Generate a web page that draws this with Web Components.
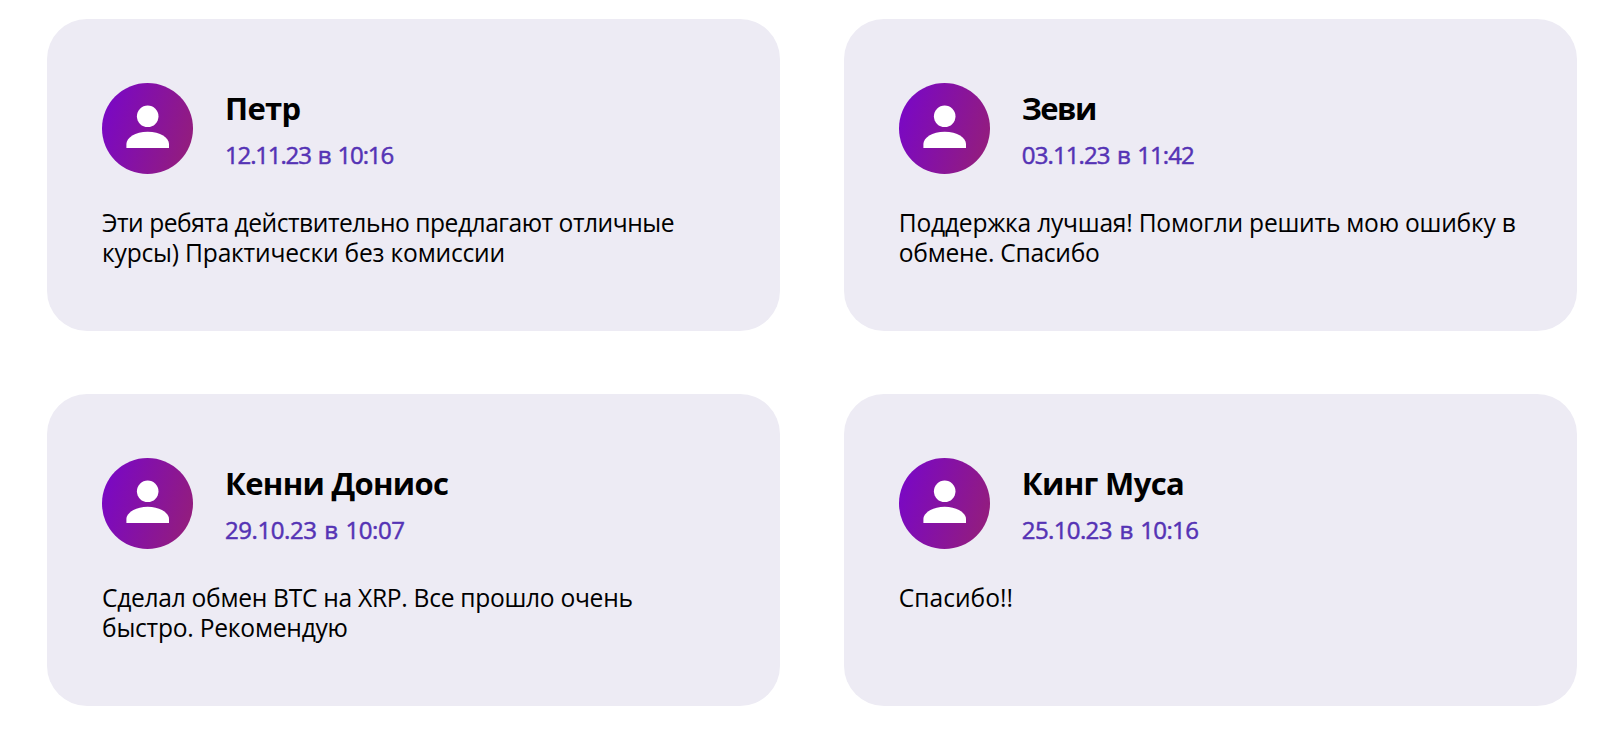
<!DOCTYPE html>
<html lang="ru">
<head>
    <meta charset="UTF-8">
    <title>Отзывы</title>
    <style>
        body {
            margin: 0;
            background-color: #fff;
            color: #000;
            font-family: "Open Sans", "Noto Sans", sans-serif;
            font-size: 24.6px;
        }
    </style>
</head>
<body>
    <review-list>
        <review-card style="--name: -0.65px; --date: -1.15px; --first: -0.48px; --rest: -0.19px">
            <span slot="name">Петр</span>
            <span slot="date">12.11.23 в 10:16</span>
            Эти ребята действительно предлагают отличные<br>курсы) Практически без комиссии
        </review-card>
        <review-card style="--name: -1.6px; --date: -0.89px; --first: -0.23px; --rest: -0.26px">
            <span slot="name">Зеви</span>
            <span slot="date">03.11.23 в 11:42</span>
            Поддержка лучшая! Помогли решить мою ошибку в<br>обмене. Спасибо
        </review-card>
        <review-card style="--name: -0.68px; --date: -0.43px; --first: -0.29px; --rest: -0.23px">
            <span slot="name">Кенни Дониос</span>
            <span slot="date">29.10.23 в 10:07</span>
            Сделал обмен BTC на XRP. Все прошло очень<br>быстро. Рекомендую
        </review-card>
        <review-card style="--name: -0.65px; --date: -0.62px; --first: 0px; --rest: 0px">
            <span slot="name">Кинг Муса</span>
            <span slot="date">25.10.23 в 10:16</span>
            Спасибо!!
        </review-card>
    </review-list>

    <script>
        class UserAvatar extends HTMLElement {
            connectedCallback() {
                this.attachShadow({ mode: 'open' });
                this.shadowRoot.innerHTML = `
                    <style>
                        :host {
                            display: block;
                            flex: none;
                            width: 91px;
                            height: 91px;
                        }
                        svg {
                            display: block;
                            width: 100%;
                            height: 100%;
                        }
                    </style>
                    <svg viewBox="0 0 91 91">
                        <defs>
                            <linearGradient id="fill" x1="0" y1="0.35" x2="1" y2="0.65">
                                <stop offset="0" stop-color="#7a08c4"/>
                                <stop offset="1" stop-color="#931d7d"/>
                            </linearGradient>
                        </defs>
                        <circle cx="45.5" cy="45.5" r="45.5" fill="url(#fill)"/>
                        <circle cx="45.7" cy="33.3" r="10.8" fill="#fff"/>
                        <path d="M24.4 65V61C24.4 55 33 48.8 45.7 48.8S67 55 67 61V65Z" fill="#fff"/>
                    </svg>
                `;
            }
        }

        class ReviewCard extends HTMLElement {
            connectedCallback() {
                this.attachShadow({ mode: 'open' });
                this.shadowRoot.innerHTML = `
                    <style>
                        :host {
                            display: block;
                            box-sizing: border-box;
                            padding: 64px 55px 0;
                            border-radius: 40px;
                            background-color: #edebf4;
                        }
                        .author {
                            display: flex;
                            align-items: center;
                            gap: 32px;
                        }
                        .name {
                            font-size: 31px;
                            font-weight: 700;
                            line-height: 44px;
                            letter-spacing: var(--name);
                        }
                        .date {
                            margin-top: 7px;
                            color: #5533b5;
                            font-size: 24px;
                            font-weight: 500;
                            line-height: 35px;
                            letter-spacing: var(--date);
                            word-spacing: 2px;
                            -webkit-text-stroke: 0.5px #5533b5;
                        }
                        .text {
                            margin-top: 33.5px;
                            line-height: 30.7px;
                            letter-spacing: var(--rest);
                            white-space: nowrap;
                        }
                        .text::first-line {
                            letter-spacing: var(--first);
                        }
                    </style>
                    <div class="author">
                        <user-avatar></user-avatar>
                        <div>
                            <div class="name"><slot name="name"></slot></div>
                            <div class="date"><slot name="date"></slot></div>
                        </div>
                    </div>
                    <div class="text"><slot></slot></div>
                `;
            }
        }

        class ReviewList extends HTMLElement {
            connectedCallback() {
                this.attachShadow({ mode: 'open' });
                this.shadowRoot.innerHTML = `
                    <style>
                        :host {
                            display: grid;
                            grid-template-columns: repeat(2, minmax(0, 1fr));
                            grid-auto-rows: 311.7px;
                            gap: 63.6px;
                            padding: 19px 23px 0 47px;
                        }
                    </style>
                    <slot></slot>
                `;
            }
        }

        customElements.define('user-avatar', UserAvatar);
        customElements.define('review-card', ReviewCard);
        customElements.define('review-list', ReviewList);
    </script>
</body>
</html>
